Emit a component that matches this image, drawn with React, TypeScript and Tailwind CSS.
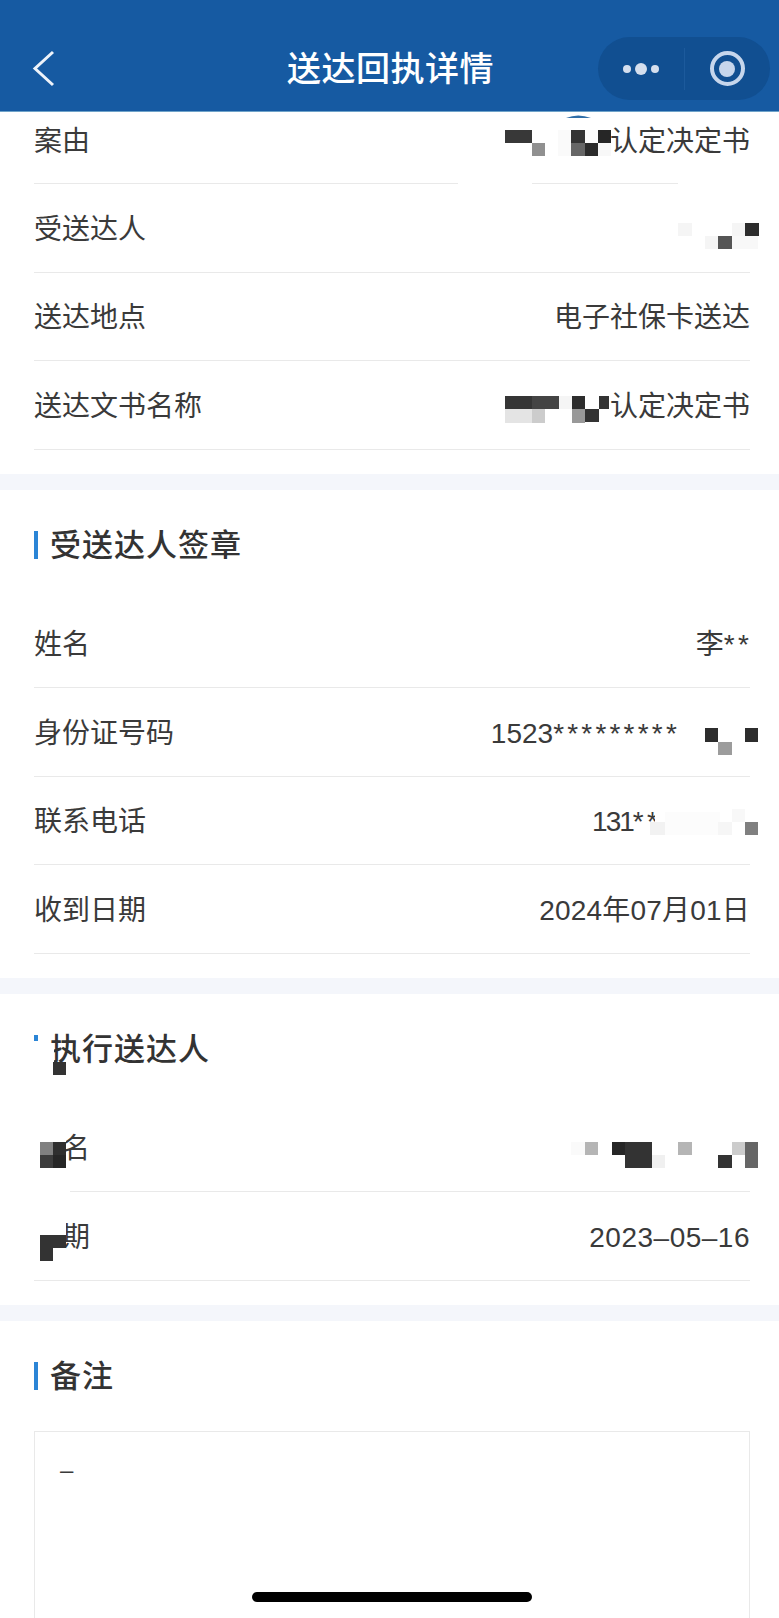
import React from 'react';

const FONT = "font-['Liberation_Sans','Noto_Sans_CJK_SC',sans-serif]";

type Block = [number, number, number, number, string];

// white patches that hide the redacted text and divider pieces
const MASKS: Block[] = [
  [458, 180, 74, 8, '#ffffff'],
  [678, 180, 74, 8, '#ffffff'],
  [34, 1041, 4, 34, '#ffffff'],
  [38, 1044, 16, 34, '#ffffff'],
  [34, 1130, 32, 58, '#ffffff'],
  [34, 1188, 36, 6, '#ffffff'],
  [34, 1222, 32, 44, '#ffffff'],
  [655, 808, 30, 27, '#ffffff'],
];

// mosaic cells over personal data, [x, y, w, h, colour]
const CELLS: Block[] = [
  [505, 130, 27, 13, '#383838'],
  [532, 143, 13, 13, '#909090'],
  [558, 130, 13, 26, '#fafafa'],
  [571, 130, 14, 13, '#333333'],
  [585, 130, 13, 13, '#fbfbfb'],
  [598, 130, 13, 13, '#262626'],
  [571, 143, 14, 13, '#666666'],
  [585, 143, 13, 13, '#2b2b2b'],
  [598, 143, 13, 13, '#f8f8f8'],
  [678, 223, 14, 13, '#f5f5f5'],
  [732, 223, 13, 13, '#f5f5f5'],
  [745, 223, 14, 13, '#2d2d2d'],
  [705, 236, 13, 13, '#f5f5f5'],
  [718, 236, 14, 13, '#555555'],
  [732, 236, 26, 13, '#f8f8f8'],
  [505, 396, 27, 13, '#353535'],
  [532, 396, 27, 13, '#444444'],
  [559, 396, 13, 13, '#f5f5f5'],
  [572, 396, 13, 13, '#2d2d2d'],
  [599, 396, 10, 13, '#333333'],
  [505, 409, 27, 14, '#e4e4e4'],
  [532, 409, 13, 14, '#cccccc'],
  [572, 409, 13, 14, '#999999'],
  [585, 409, 14, 13, '#333333'],
  [705, 728, 13, 14, '#2d2d2d'],
  [718, 742, 14, 13, '#9c9c9c'],
  [745, 728, 13, 14, '#2d2d2d'],
  [650, 822, 15, 13, '#f2f2f2'],
  [665, 812, 55, 23, '#fcfcfc'],
  [732, 809, 13, 13, '#f8f8f8'],
  [718, 822, 14, 13, '#f6f6f6'],
  [745, 822, 13, 13, '#808080'],
  [53, 1062, 13, 13, '#333333'],
  [40, 1142, 13, 13, '#808080'],
  [53, 1142, 13, 13, '#2f2f2f'],
  [40, 1155, 13, 13, '#3c3c3c'],
  [53, 1155, 13, 13, '#262626'],
  [571, 1142, 14, 13, '#fafafa'],
  [585, 1142, 13, 13, '#b5b5b5'],
  [612, 1142, 13, 13, '#262626'],
  [625, 1142, 27, 13, '#333333'],
  [625, 1155, 27, 13, '#333333'],
  [652, 1155, 13, 13, '#f0f0f0'],
  [678, 1142, 14, 13, '#b5b5b5'],
  [718, 1155, 14, 13, '#333333'],
  [732, 1142, 13, 13, '#cccccc'],
  [745, 1142, 13, 13, '#666666'],
  [745, 1155, 13, 13, '#666666'],
  [40, 1235, 26, 13, '#333333'],
  [40, 1248, 13, 13, '#333333'],
];

const Row: React.FC<{ label: string; value: React.ReactNode; first?: boolean }> = ({ label, value, first }) => (
  <div className={`flex justify-between items-center border-b border-[#e9e9e9] text-[28px] text-[#3a3a3a] ${first ? 'h-[72px] pb-[11px]' : 'h-[88.5px] pt-[4px]'}`}>
    <span>{label}</span>
    {value}
  </div>
);

const Heading: React.FC<{ title: string }> = ({ title }) => (
  <div className="h-[110px] flex items-center gap-[12px]">
    <div className="w-[4px] h-[28px] bg-[#2b85d6]" />
    <h2 className="pt-[3px] text-[31px] font-medium tracking-[1px] text-[#333333]">{title}</h2>
  </div>
);

const Stars: React.FC<{ children: string }> = ({ children }) => <span className="tracking-[3.2px]">{children}</span>;

const Band = () => <div className="h-[16px] bg-[#f4f6fb]" />;

export default function App() {
  return (
    <div className={`relative h-[1618px] w-[779px] overflow-hidden bg-white ${FONT}`}>
      <header className="h-[112px] bg-[#165aa2] relative flex items-center justify-center pt-[28px] border-b border-[#6fa3c9]">
        <svg className="absolute left-0 top-0" width="70" height="112" fill="none">
          <path d="M53 52 L35 68.5 L53 85" stroke="#eef3fa" strokeWidth="3" />
        </svg>
        <h1 className="text-[34px] font-medium tracking-[0.5px] text-white ml-[2px]">送达回执详情</h1>
        <div className="absolute left-[598px] top-[37px] w-[172px] h-[63px] rounded-full bg-[#114f91] flex items-center">
          <div className="flex-1 h-full flex items-center justify-center gap-[4px]">
            <span className="w-[8px] h-[8px] rounded-full bg-[#d5dfee]" />
            <span className="w-[12px] h-[12px] rounded-full bg-[#d5dfee]" />
            <span className="w-[8px] h-[8px] rounded-full bg-[#d5dfee]" />
          </div>
          <div className="w-px h-[42px] bg-[#1c5a9c]" />
          <div className="flex-1 h-full flex items-center justify-center">
            <div className="w-[35px] h-[35px] rounded-full border-[4px] border-[#c6d6ec] flex items-center justify-center">
              <span className="w-[16px] h-[16px] rounded-full bg-[#c6d6ec]" />
            </div>
          </div>
        </div>
      </header>

      <section className="pl-[34px] pr-[29px] pb-[24px]">
        <Row first label="案由" value={<span>认定决定书</span>} />
        <Row label="受送达人" value={<span />} />
        <Row label="送达地点" value={<span>电子社保卡送达</span>} />
        <Row label="送达文书名称" value={<span>认定决定书</span>} />
      </section>
      <Band />

      <section className="pl-[34px] pr-[29px] pb-[24px]">
        <Heading title="受送达人签章" />
        <Row label="姓名" value={<span className="-mr-[2px]">李<Stars>**</Stars></span>} />
        <Row label="身份证号码" value={<span className="pr-[70px]">1523<Stars>*********</Stars></span>} />
        <Row label="联系电话" value={<span className="pr-[89px]"><span className="tracking-[-2px]">131</span><Stars>**</Stars></span>} />
        <Row label="收到日期" value={<span className="tracking-[0.2px]">2024年07月01日</span>} />
      </section>
      <Band />

      <section className="pl-[34px] pr-[29px] pb-[24px]">
        <Heading title="执行送达人" />
        <Row label="姓名" value={<span />} />
        <Row label="日期" value={<span className="tracking-[0.5px]">2023–05–16</span>} />
      </section>
      <Band />

      <section className="pl-[34px] pr-[29px]">
        <Heading title="备注" />
        <div className="h-[300px] border border-[#e9e9e9] px-[25px] py-[20px] text-[24px] text-[#3a3a3a]">–</div>
      </section>

      {/* redaction layer */}
      <svg className="absolute left-0 top-0 pointer-events-none" width="779" height="1618">
        {MASKS.concat(CELLS).map(([x, y, w, h, fill], i) => (
          <rect key={i} x={x} y={y} width={w} height={h} fill={fill} />
        ))}
        <path d="M566 118 Q578 113 591 118 Z" fill="#2f6ea8" />
      </svg>

      <div className="absolute left-[252px] top-[1592px] w-[280px] h-[10px] rounded-full bg-black" />
    </div>
  );
}
